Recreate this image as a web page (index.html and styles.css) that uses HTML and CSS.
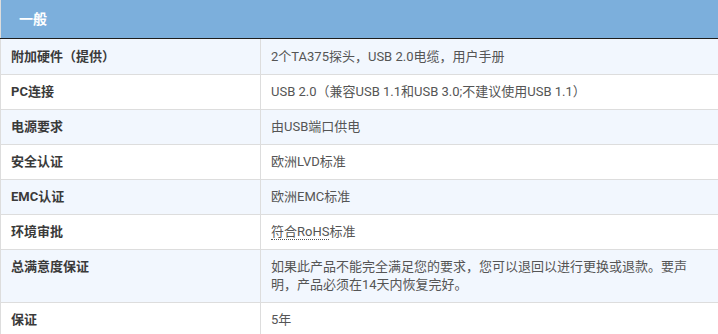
FILE: index.html
```html
<!DOCTYPE html>
<html lang="zh-CN">
<head>
<meta charset="utf-8">
<title>规格</title>
<link rel="stylesheet" href="styles.css">
</head>
<body>
<table class="spec">
  <colgroup><col class="col-label"><col class="col-value"></colgroup>
  <thead>
    <tr><th colspan="2" class="spec-head">一般</th></tr>
  </thead>
  <tbody>
    <tr class="alt"><td class="label">附加硬件（提供）</td><td class="value">2个TA375探头，USB 2.0电缆，用户手册</td></tr>
    <tr><td class="label">PC连接</td><td class="value">USB 2.0（兼容USB 1.1和USB 3.0;不建议使用USB 1.1）</td></tr>
    <tr class="alt"><td class="label">电源要求</td><td class="value">由USB端口供电</td></tr>
    <tr><td class="label">安全认证</td><td class="value">欧洲LVD标准</td></tr>
    <tr class="alt"><td class="label">EMC认证</td><td class="value">欧洲EMC标准</td></tr>
    <tr><td class="label">环境审批</td><td class="value"><abbr class="dotted" title="RoHS">符合RoHS</abbr>标准</td></tr>
    <tr class="alt"><td class="label">总满意度保证</td><td class="value">如果此产品不能完全满足您的要求，您可以退回以进行更换或退款。要声明，产品必须在14天内恢复完好。</td></tr>
    <tr><td class="label">保证</td><td class="value">5年</td></tr>
  </tbody>
</table>
</body>
</html>
```

FILE: styles.css
```css
html, body {
  margin: 0;
  padding: 0;
  background: #ffffff;
}

body {
  font-family: Roboto, "Noto Sans CJK SC", sans-serif;
  font-size: 13px;
  line-height: 18px;
  color: #555555;
}

.spec {
  width: 718px;
  border-collapse: collapse;
  border-left: 1px solid #dddddd;
  table-layout: fixed;
}

.col-label {
  width: 260px;
}

.spec-head {
  height: 38px;
  padding: 0 0 0 18px;
  box-sizing: border-box;
  background: #7cafdc;
  color: #ffffff;
  font-weight: bold;
  font-size: 14px;
  text-align: left;
  border-bottom: 1px solid #1e1e1e;
}

.spec td {
  padding: 8px 10px;
  border-bottom: 1px solid #dddddd;
  vertical-align: top;
}

.spec tbody tr:first-child td {
  padding-top: 9px;
}

.spec .label {
  font-weight: bold;
  color: #3a3a3a;
  border-right: 1px solid #dddddd;
}

.spec .value {
  padding-right: 24px;
  color: #555555;
}

.spec tr.alt td {
  background: #f2f7fe;
}

.dotted {
  text-decoration: none;
  border-bottom: 1px dotted #555555;
}
```
